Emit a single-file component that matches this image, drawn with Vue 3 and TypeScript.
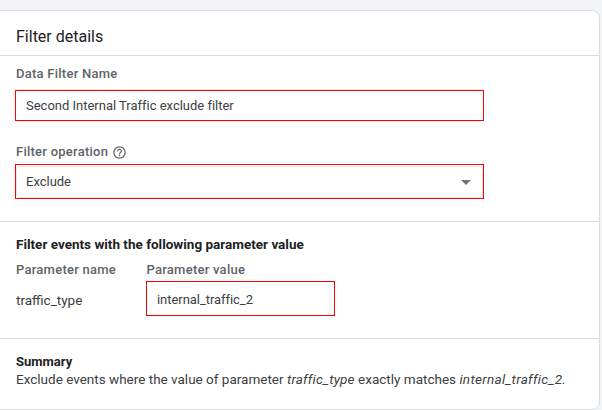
<script setup lang="ts">
const title = 'Filter details'
</script>

<template>
  <div class="page">
    <div class="card">
      <header class="head">{{ title }}</header>
      <section class="sec first">
        <div class="label">Data Filter Name</div>
        <div class="field wide h-name">
          <div class="inner">Second Internal Traffic exclude filter</div>
        </div>
        <div class="label op">
          Filter operation
          <svg class="help" viewBox="0 0 24 24" width="15" height="15">
            <path fill="#5f6368" d="M11 18h2v-2h-2v2zm1-16C6.48 2 2 6.48 2 12s4.48 10 10 10 10-4.48 10-10S17.52 2 12 2zm0 18c-4.41 0-8-3.59-8-8s3.59-8 8-8 8 3.59 8 8-3.59 8-8 8zm0-14c-2.21 0-4 1.79-4 4h2c0-1.1.9-2 2-2s2 .9 2 2c0 2-3 1.75-3 5h2c0-2.25 3-2.5 3-5 0-2.21-1.79-4-4-4z"/>
          </svg>
        </div>
        <div class="field wide h-op">
          <div class="inner sel">
            <span>Exclude</span>
            <span class="caret"></span>
          </div>
        </div>
      </section>
      <section class="sec second">
        <div class="sub">Filter events with the following parameter value</div>
        <div class="grid">
          <div class="label tight">Parameter name</div>
          <div class="label tight lv">Parameter value</div>
          <div class="cell">traffic_type</div>
          <div class="field val"><div class="inner">internal_traffic_2</div></div>
        </div>
      </section>
      <section class="sec third">
        <div class="sub s2">Summary</div>
        <p class="sum">Exclude events where the value of parameter <em>traffic_type</em> exactly matches <em class="last">internal_traffic_2.</em></p>
      </section>
    </div>
  </div>
</template>

<style>
html, body { margin: 0; background: #f1f3f4; }
</style>

<style scoped>
.page {
  width: 602px;
  height: 410px;
  overflow: hidden;
  background: #f1f3f4;
  padding-top: 10px;
  box-sizing: border-box;
  font-family: Roboto, "Liberation Sans", sans-serif;
  color: #3c4043;
}
.card {
  position: relative;
  z-index: 0;
  margin-left: -8px;
  width: 607.5px;
  height: 400px;
  box-sizing: border-box;
  background: #fff;
  border: 1px solid #dadce0;
  border-radius: 8px;
}
.head {
  height: 45px;
  box-sizing: border-box;
  padding: 15px 0 0 23px;
  font-size: 16px;
  line-height: 21px;
  color: #202124;
  border-bottom: 1px solid #dadce0;
}
.sec { border-bottom: 1px solid #dadce0; padding-left: 22px; }
.first { height: 166px; box-sizing: border-box; padding-top: 10px; }
.second { height: 117px; box-sizing: border-box; padding-top: 14px; }
.third { border-bottom: 0; padding-top: 15px; }
.label {
  font-size: 13px;
  font-weight: 500;
  line-height: 16px;
  color: #5f6368;
  letter-spacing: 0.25px;
  padding-left: 1px;
}
.lv { padding-left: 0.5px; }
.op { margin-top: 23px; display: flex; align-items: center; gap: 4px; height: 16px; }
.help { display: block; }
.field {
  position: relative;
  box-sizing: border-box;
  border: 1px solid #f00;
  background: #fff;
  font-size: 13px;
  color: #3c4043;
  letter-spacing: -0.01px;
}
.wide { width: 469px; margin-top: 8px; }
.h-name { height: 31px; }
.h-name::before {
  content: "";
  position: absolute;
  inset: -2px -1px;
  border: 1px solid #e4e6e8;
  border-radius: 4px;
  z-index: -1;
}
.h-op { height: 35px; margin-top: 4px; }
.h-op::before {
  content: "";
  position: absolute;
  inset: 1px 0 0 0;
  border: 1px solid #e4e6e8;
  border-radius: 4px;
}
.inner { position: relative; padding-left: 10px; line-height: 29px; }
.sel { display: flex; justify-content: space-between; align-items: center; height: 33px; line-height: 33px; padding-right: 12px; }
.caret {
  width: 0; height: 0;
  margin-top: 2px;
  border-left: 5px solid transparent;
  border-right: 5px solid transparent;
  border-top: 5px solid #757575;
}
.sub {
  font-size: 13.5px;
  font-weight: 700;
  line-height: 16px;
  color: #202124;
  padding-left: 1px;
}
.grid {
  display: grid;
  grid-template-columns: 131px 189px;
  grid-template-rows: 16px 35px;
  row-gap: 3px;
  margin-top: 10px;
  align-items: center;
}
.tight { align-self: start; }
.cell { font-size: 13.5px; color: #3c4043; padding: 2px 0 0 1px; }
.val { height: 35px; }
.val .inner { line-height: 33px; padding-top: 1px; letter-spacing: -0.05px; }
.s2 { font-size: 13px; }
.sum { margin: 0; padding-left: 1px; font-size: 13.5px; line-height: 18px; color: #3c4043; white-space: nowrap; }
.sum em { letter-spacing: 0.2px; }
.sum em.last { letter-spacing: 0.3px; }
</style>
